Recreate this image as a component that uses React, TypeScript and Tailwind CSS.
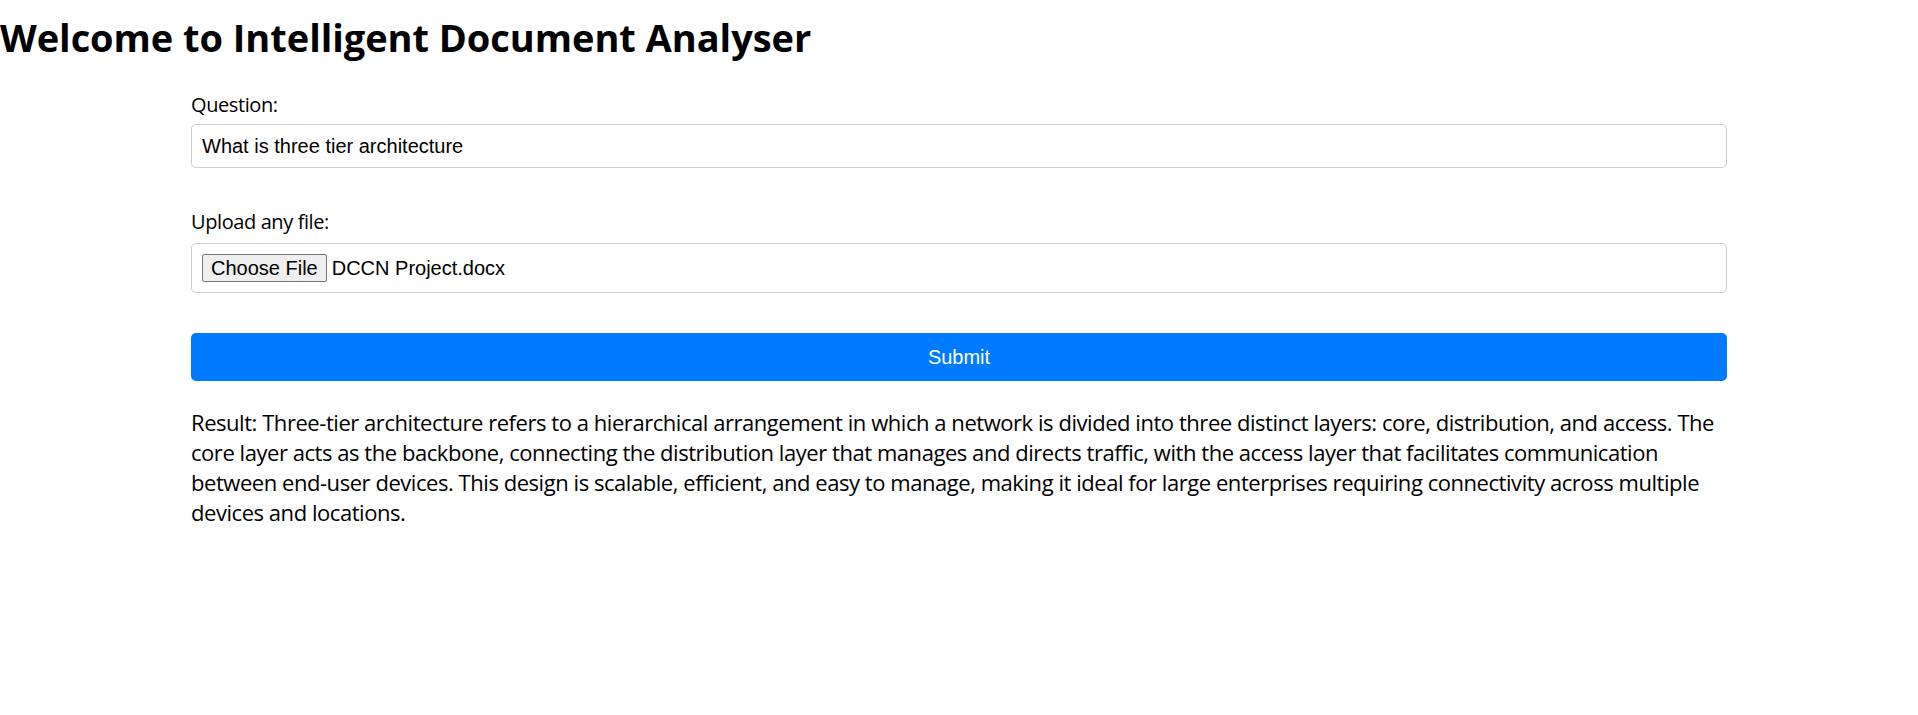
import React, { useState } from 'react';

function App() {
  const [question, setQuestion] = useState('What is three tier architecture');

  return (
    <div className="min-h-screen bg-white pt-[11px] text-black font-['Open_Sans',sans-serif]">
      {/* Title */}
      <h1 className="text-[38px] font-bold leading-[53px] tracking-[-0.05px]">
        Welcome to Intelligent Document Analyser
      </h1>

      <form className="w-[1536px] mx-auto mt-[28px]" onSubmit={e => e.preventDefault()}>
        {/* Question */}
        <label className="block text-[20px] leading-[26px] tracking-[-0.4px]">Question:</label>
        <input
          type="text"
          value={question}
          onChange={e => setQuestion(e.target.value)}
          className="block w-full h-[44px] mt-[6px] px-[10px] border border-[#cccccc] rounded-[5px] text-[20px] font-['Liberation_Sans',Arial,sans-serif] outline-none"
        />

        {/* File upload */}
        <label className="block mt-[41px] text-[20px] leading-[26px] tracking-[-0.4px]">Upload any file:</label>
        <div className="flex items-center w-full h-[50px] mt-[8px] px-[10px] border border-[#cccccc] rounded-[5px] font-['Liberation_Sans',Arial,sans-serif] text-[20px]">
          <button
            type="button"
            className="h-[28px] px-[8px] border border-[#767676] rounded-[2px] bg-[#efefef] text-[20px] leading-[23px] text-black"
          >
            Choose File
          </button>
          <span className="ml-[5px]">DCCN Project.docx</span>
        </div>

        {/* Submit */}
        <button
          type="submit"
          className="block w-full h-[48px] mt-[40px] rounded-[5px] bg-[#007bff] text-white text-[20px] font-['Liberation_Sans',Arial,sans-serif]"
        >
          Submit
        </button>

        {/* Result */}
        <p className="mt-[26px] text-[22px] leading-[30px] tracking-[-0.45px]">
          Result: Three-tier architecture refers to a hierarchical arrangement in which a network is divided into three distinct layers: core, distribution, and access. The core layer acts as the backbone, connecting the distribution layer that manages and directs traffic, with the access layer that facilitates communication between end-user devices. This design is scalable, efficient, and easy to manage, making it ideal for large enterprises requiring connectivity across multiple devices and locations.
        </p>
      </form>
    </div>
  );
}

export default App;
